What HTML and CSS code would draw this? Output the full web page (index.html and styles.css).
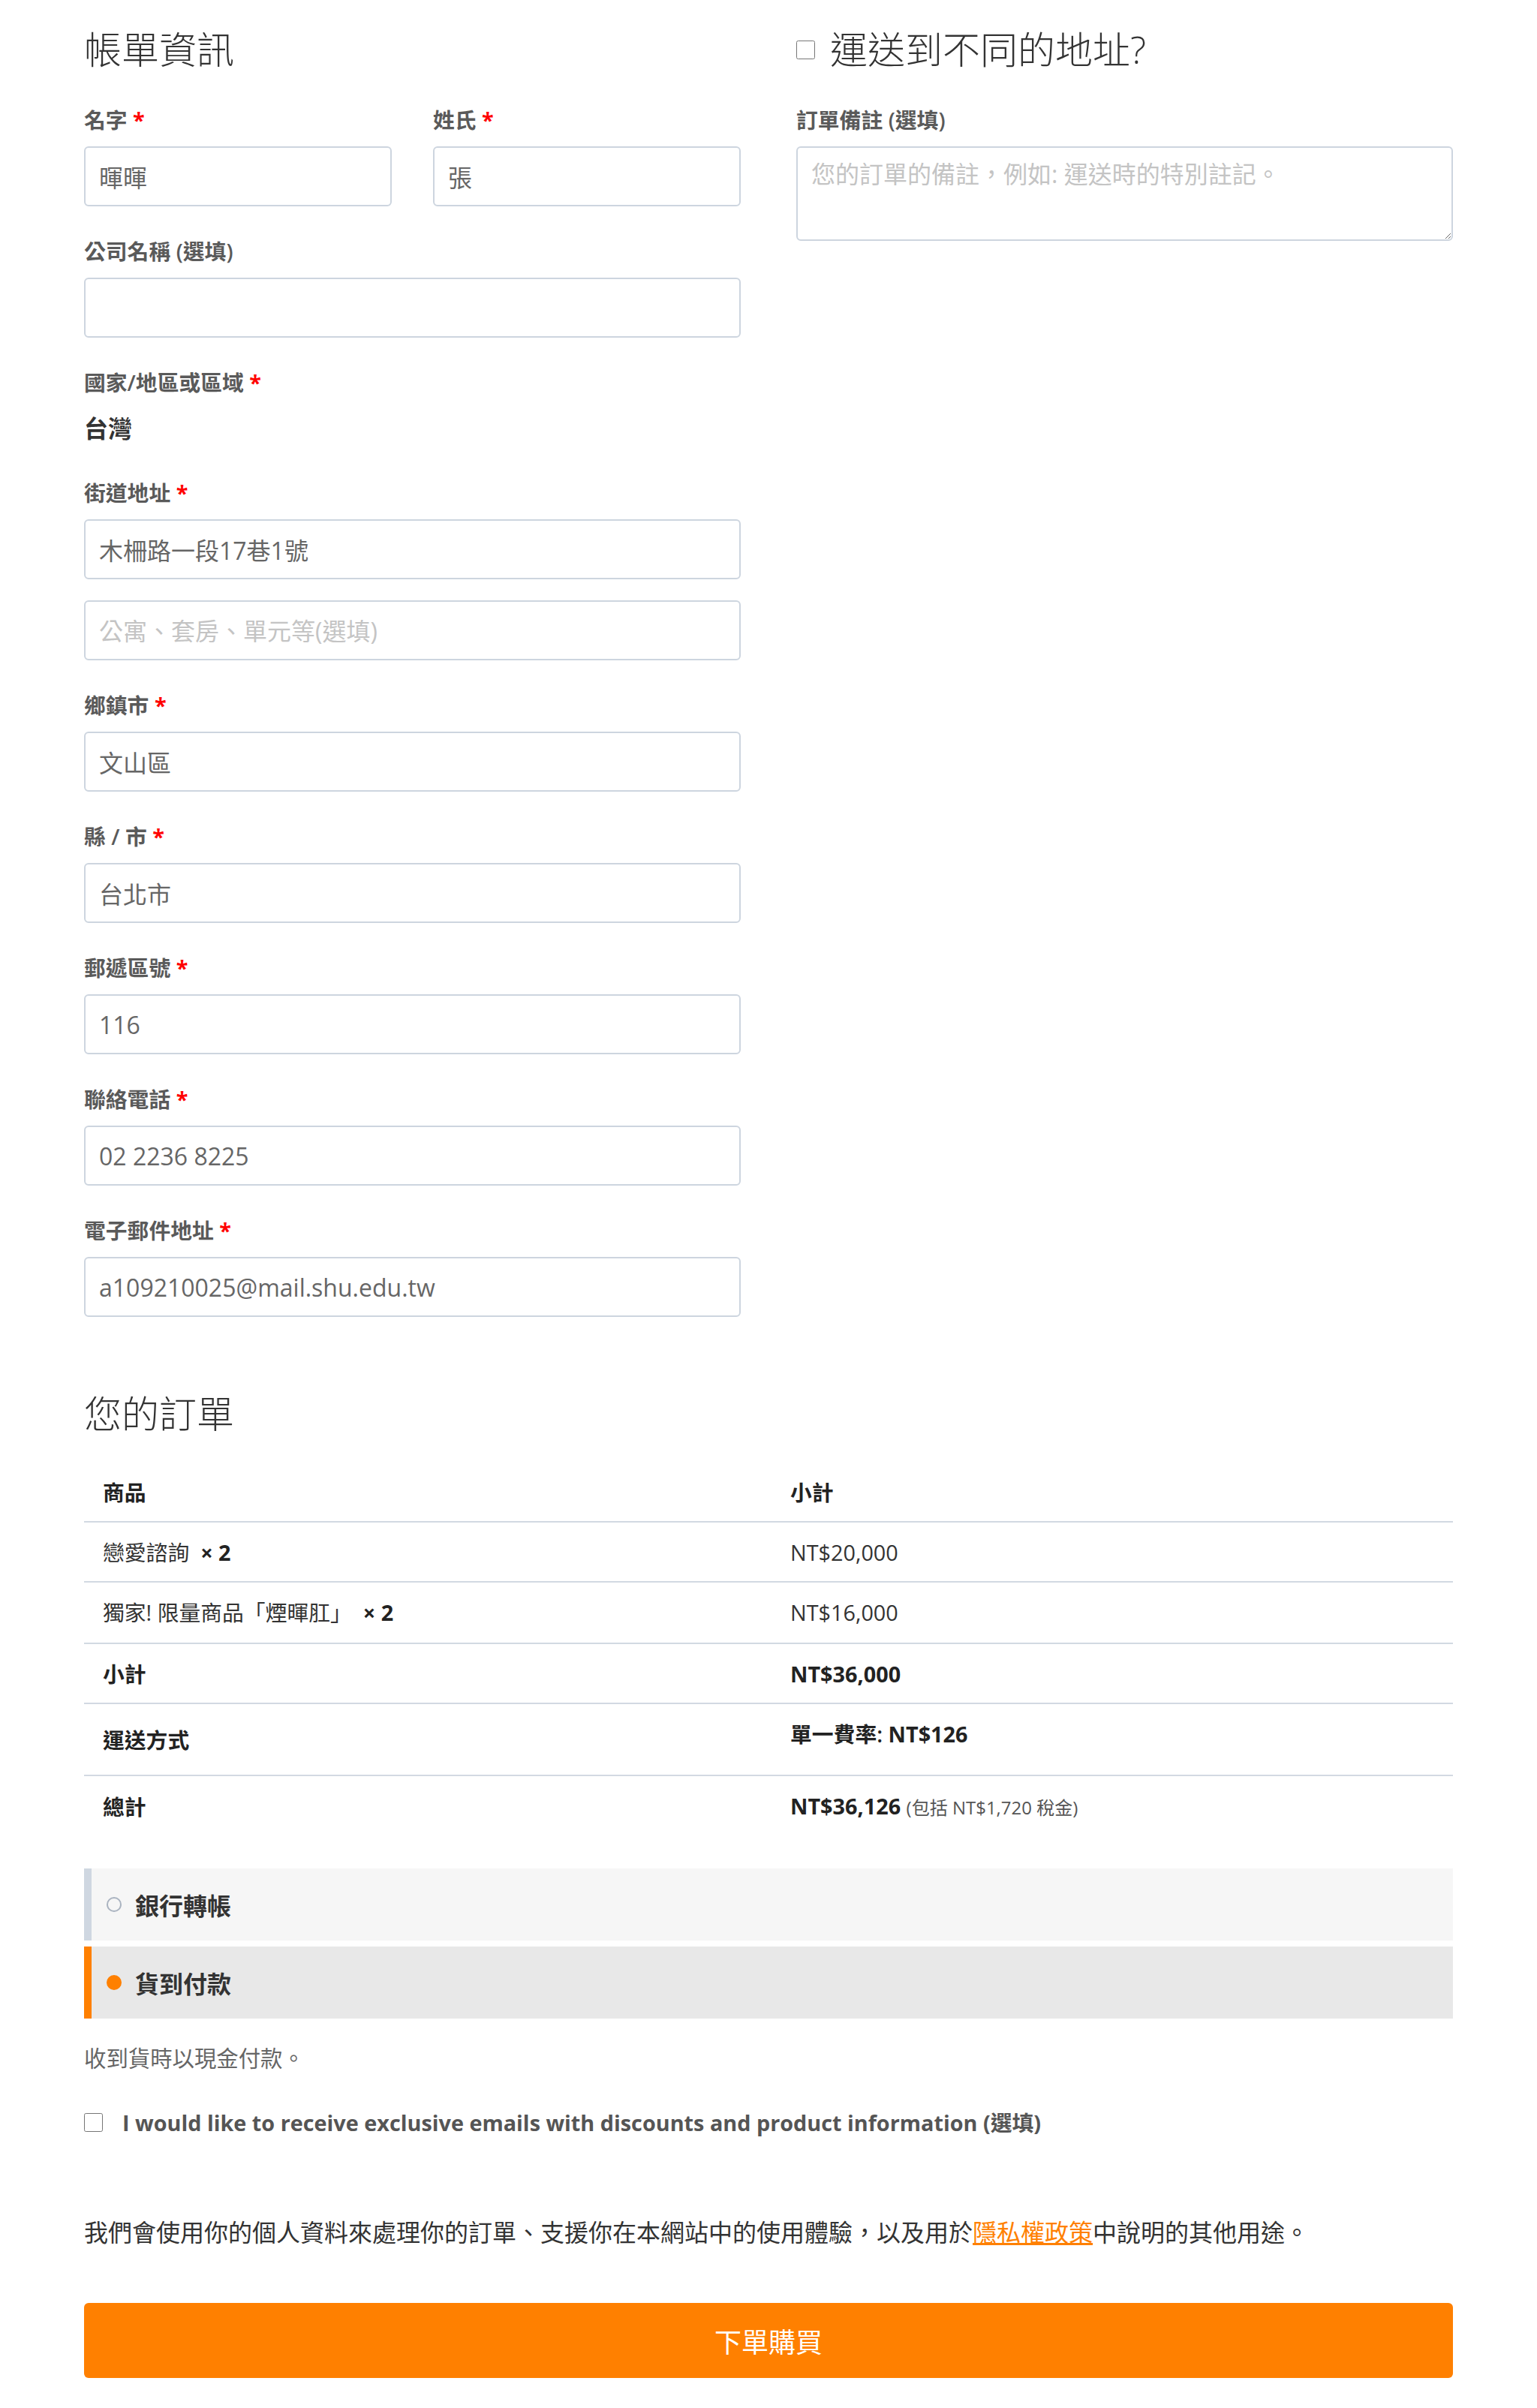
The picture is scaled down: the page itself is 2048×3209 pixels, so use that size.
FILE: index.html
```html
<!doctype html>
<html>
    <head>
        <meta charset="utf-8">
        <title>結帳</title>
        <link rel="stylesheet" href="styles.css">
    </head>
    <body>
        <form class="checkout">
            <div class="cols">
                <div class="billing">
                    <h3 class="section-title">帳單資訊</h3>

                    <div class="name-pair">
                        <div class="field">
                            <label>名字 <span class="required">*</span></label>
                            <input type="text" class="input-text" value="暉暉">
                        </div>
                        <div class="field">
                            <label>姓氏 <span class="required">*</span></label>
                            <input type="text" class="input-text" value="張">
                        </div>
                    </div>

                    <div class="field">
                        <label>公司名稱 (選填)</label>
                        <input type="text" class="input-text" value="">
                    </div>

                    <div class="field">
                        <label>國家/地區或區域 <span class="required">*</span></label>
                        <div class="country">台灣</div>
                    </div>

                    <div class="field">
                        <label>街道地址 <span class="required">*</span></label>
                        <input type="text" class="input-text" value="木柵路一段17巷1號">
                        <input type="text" class="input-text" placeholder="公寓、套房、單元等(選填)">
                    </div>

                    <div class="field">
                        <label>鄉鎮市 <span class="required">*</span></label>
                        <input type="text" class="input-text" value="文山區">
                    </div>

                    <div class="field">
                        <label>縣 / 市 <span class="required">*</span></label>
                        <input type="text" class="input-text" value="台北市">
                    </div>

                    <div class="field">
                        <label>郵遞區號 <span class="required">*</span></label>
                        <input type="text" class="input-text" value="116">
                    </div>

                    <div class="field">
                        <label>聯絡電話 <span class="required">*</span></label>
                        <input type="tel" class="input-text" value="02 2236 8225">
                    </div>

                    <div class="field">
                        <label>電子郵件地址 <span class="required">*</span></label>
                        <input type="email" class="input-text" value="a109210025@mail.shu.edu.tw">
                    </div>
                </div>

                <div class="shipping">
                    <h3 class="section-title ship-toggle">
                        <label><input type="checkbox" class="checkbox"><span>運送到不同的地址?</span></label>
                    </h3>
                    <div class="field">
                        <label>訂單備註 (選填)</label>
                        <textarea class="input-text notes" placeholder="您的訂單的備註，例如: 運送時的特別註記。"></textarea>
                    </div>
                </div>
            </div>

            <h3 class="order-title">您的訂單</h3>

            <table class="order-table">
                <thead>
                    <tr><th class="col-name">商品</th><th>小計</th></tr>
                </thead>
                <tbody>
                    <tr>
                        <td>戀愛諮詢&nbsp; <strong class="qty">×&nbsp;2</strong></td>
                        <td>NT$20,000</td>
                    </tr>
                    <tr>
                        <td>獨家! 限量商品「煙暉肛」&nbsp; <strong class="qty">×&nbsp;2</strong></td>
                        <td>NT$16,000</td>
                    </tr>
                </tbody>
                <tfoot>
                    <tr><th>小計</th><td><strong>NT$36,000</strong></td></tr>
                    <tr class="shipping-row">
                        <th>運送方式</th>
                        <td>
                            <ul class="shipping-methods">
                                <li>單一費率: <strong>NT$126</strong></li>
                            </ul>
                        </td>
                    </tr>
                    <tr class="total-row">
                        <th>總計</th>
                        <td><strong>NT$36,126</strong> <small class="tax">(包括 NT$1,720 稅金)</small></td>
                    </tr>
                </tfoot>
            </table>

            <ul class="payment-methods">
                <li class="method"><span class="radio"></span>銀行轉帳</li>
                <li class="method selected"><span class="radio"></span>貨到付款</li>
            </ul>
            <p class="payment-desc">收到貨時以現金付款。</p>

            <label class="newsletter"><input type="checkbox" class="checkbox"><span>I would like to receive exclusive emails with discounts and product information (選填)</span></label>

            <p class="privacy">我們會使用你的個人資料來處理你的訂單、支援你在本網站中的使用體驗，以及用於<a href="#">隱私權政策</a>中說明的其他用途。</p>

            <button type="button" class="place-order">下單購買</button>
        </form>
    </body>
</html>
```

FILE: styles.css
```css
html, body {
    margin: 0;
    padding: 0;
}
body {
    font-family: "Open Sans", "Noto Sans CJK TC", sans-serif;
    color: #3a3a3a;
    background: #fff;
}
.checkout {
    width: 1824px;
    margin-left: 112px;
    padding: 37px 0 37px;
}
.cols {
    display: grid;
    grid-template-columns: 875px 875px;
    column-gap: 74px;
}


h3.section-title, .order-title {
    font-size: 50px;
    font-weight: 300;
    line-height: 58px;
    color: #333;
    margin: 0 0 43px;
}
.ship-toggle label {
    display: flex;
    align-items: center;
    gap: 20px;
}
.checkbox {
    width: 25px;
    height: 25px;
    margin: 0;
    flex: none;
}


.name-pair {
    display: grid;
    grid-template-columns: 1fr 1fr;
    column-gap: 55px;
}
.field {
    margin: 0 0 38px;
}
.field > label {
    display: block;
    font-size: 28.8px;
    line-height: 43px;
    font-weight: 600;
    color: #5a5a5a;
    margin-bottom: 14px;
}
.required {
    color: red;
    font-weight: 700;
}
.input-text {
    display: block;
    box-sizing: border-box;
    width: 100%;
    height: 80px;
    margin: 0;
    padding: 0 18px;
    border: 2px solid #cdd5df;
    border-radius: 6px;
    background: #fff;
    font-family: inherit;
    font-size: 32px;
    color: #666;
}
.input-text::placeholder {
    color: #c4c4c4;
}
.input-text + .input-text {
    margin-top: 28px;
}
textarea.notes {
    height: 126px;
    padding: 11px 18px;
    line-height: 48px;
    resize: vertical;
}
.country {
    font-size: 32px;
    line-height: 52px;
    font-weight: 700;
    color: #333;
}


.order-title {
    margin: 62px 0 36px;
}
.order-table {
    width: 100%;
    border-collapse: collapse;
    table-layout: fixed;
    font-size: 28.8px;
    line-height: 43px;
    color: #333;
}
.order-table th, .order-table td {
    padding: 18px 25px 17px;
    text-align: left;
    vertical-align: middle;
}
.order-table th {
    font-weight: 600;
    color: #222;
}
.order-table .col-name {
    width: 916px;
    box-sizing: border-box;
}
.order-table tbody td, .order-table tfoot th, .order-table tfoot td {
    border-top: 2px solid #d2d9e2;
}
.order-table tbody tr + tr td {
    padding-bottom: 19px;
}
.order-table strong {
    font-weight: 700;
    color: #222;
}
.shipping-row td {
    vertical-align: top;
}
.shipping-methods {
    list-style: none;
    margin: 0;
    padding: 0 0 16px;
    font-weight: 600;
    color: #222;
}
.tax {
    font-size: 24px;
    color: #555;
}


.payment-methods {
    list-style: none;
    margin: 43px 0 0;
    padding: 0;
}
.method {
    display: flex;
    align-items: center;
    box-sizing: border-box;
    height: 96px;
    margin-bottom: 8px;
    padding-left: 20px;
    border-left: 10px solid #cfd7e1;
    background: #f6f6f6;
    font-size: 32px;
    font-weight: 700;
    color: #333;
}
.method.selected {
    border-left-color: #ff8000;
    background: #e8e8e8;
}
.radio {
    width: 20px;
    height: 20px;
    box-sizing: border-box;
    border-radius: 50%;
    border: 2px solid #aab3c0;
    margin-right: 18px;
}
.method.selected .radio {
    border-color: #ff8000;
    background: #ff8000;
}
.payment-desc {
    margin: 31px 0 0;
    font-size: 29.4px;
    line-height: 44px;
    color: #666;
}
.newsletter {
    display: flex;
    align-items: center;
    gap: 26px;
    margin-top: 42px;
    font-size: 28.8px;
    line-height: 43px;
    font-weight: 700;
    color: #555;
}
.privacy {
    margin: 101px 0 0;
    font-size: 32px;
    line-height: 48px;
    color: #333;
}
.privacy a {
    color: #ff8000;
}
.place-order {
    display: block;
    width: 100%;
    height: 100px;
    margin-top: 70px;
    border: 0;
    border-radius: 6px;
    background: #ff8000;
    color: #fff;
    font-family: inherit;
    font-size: 36px;
}
```
